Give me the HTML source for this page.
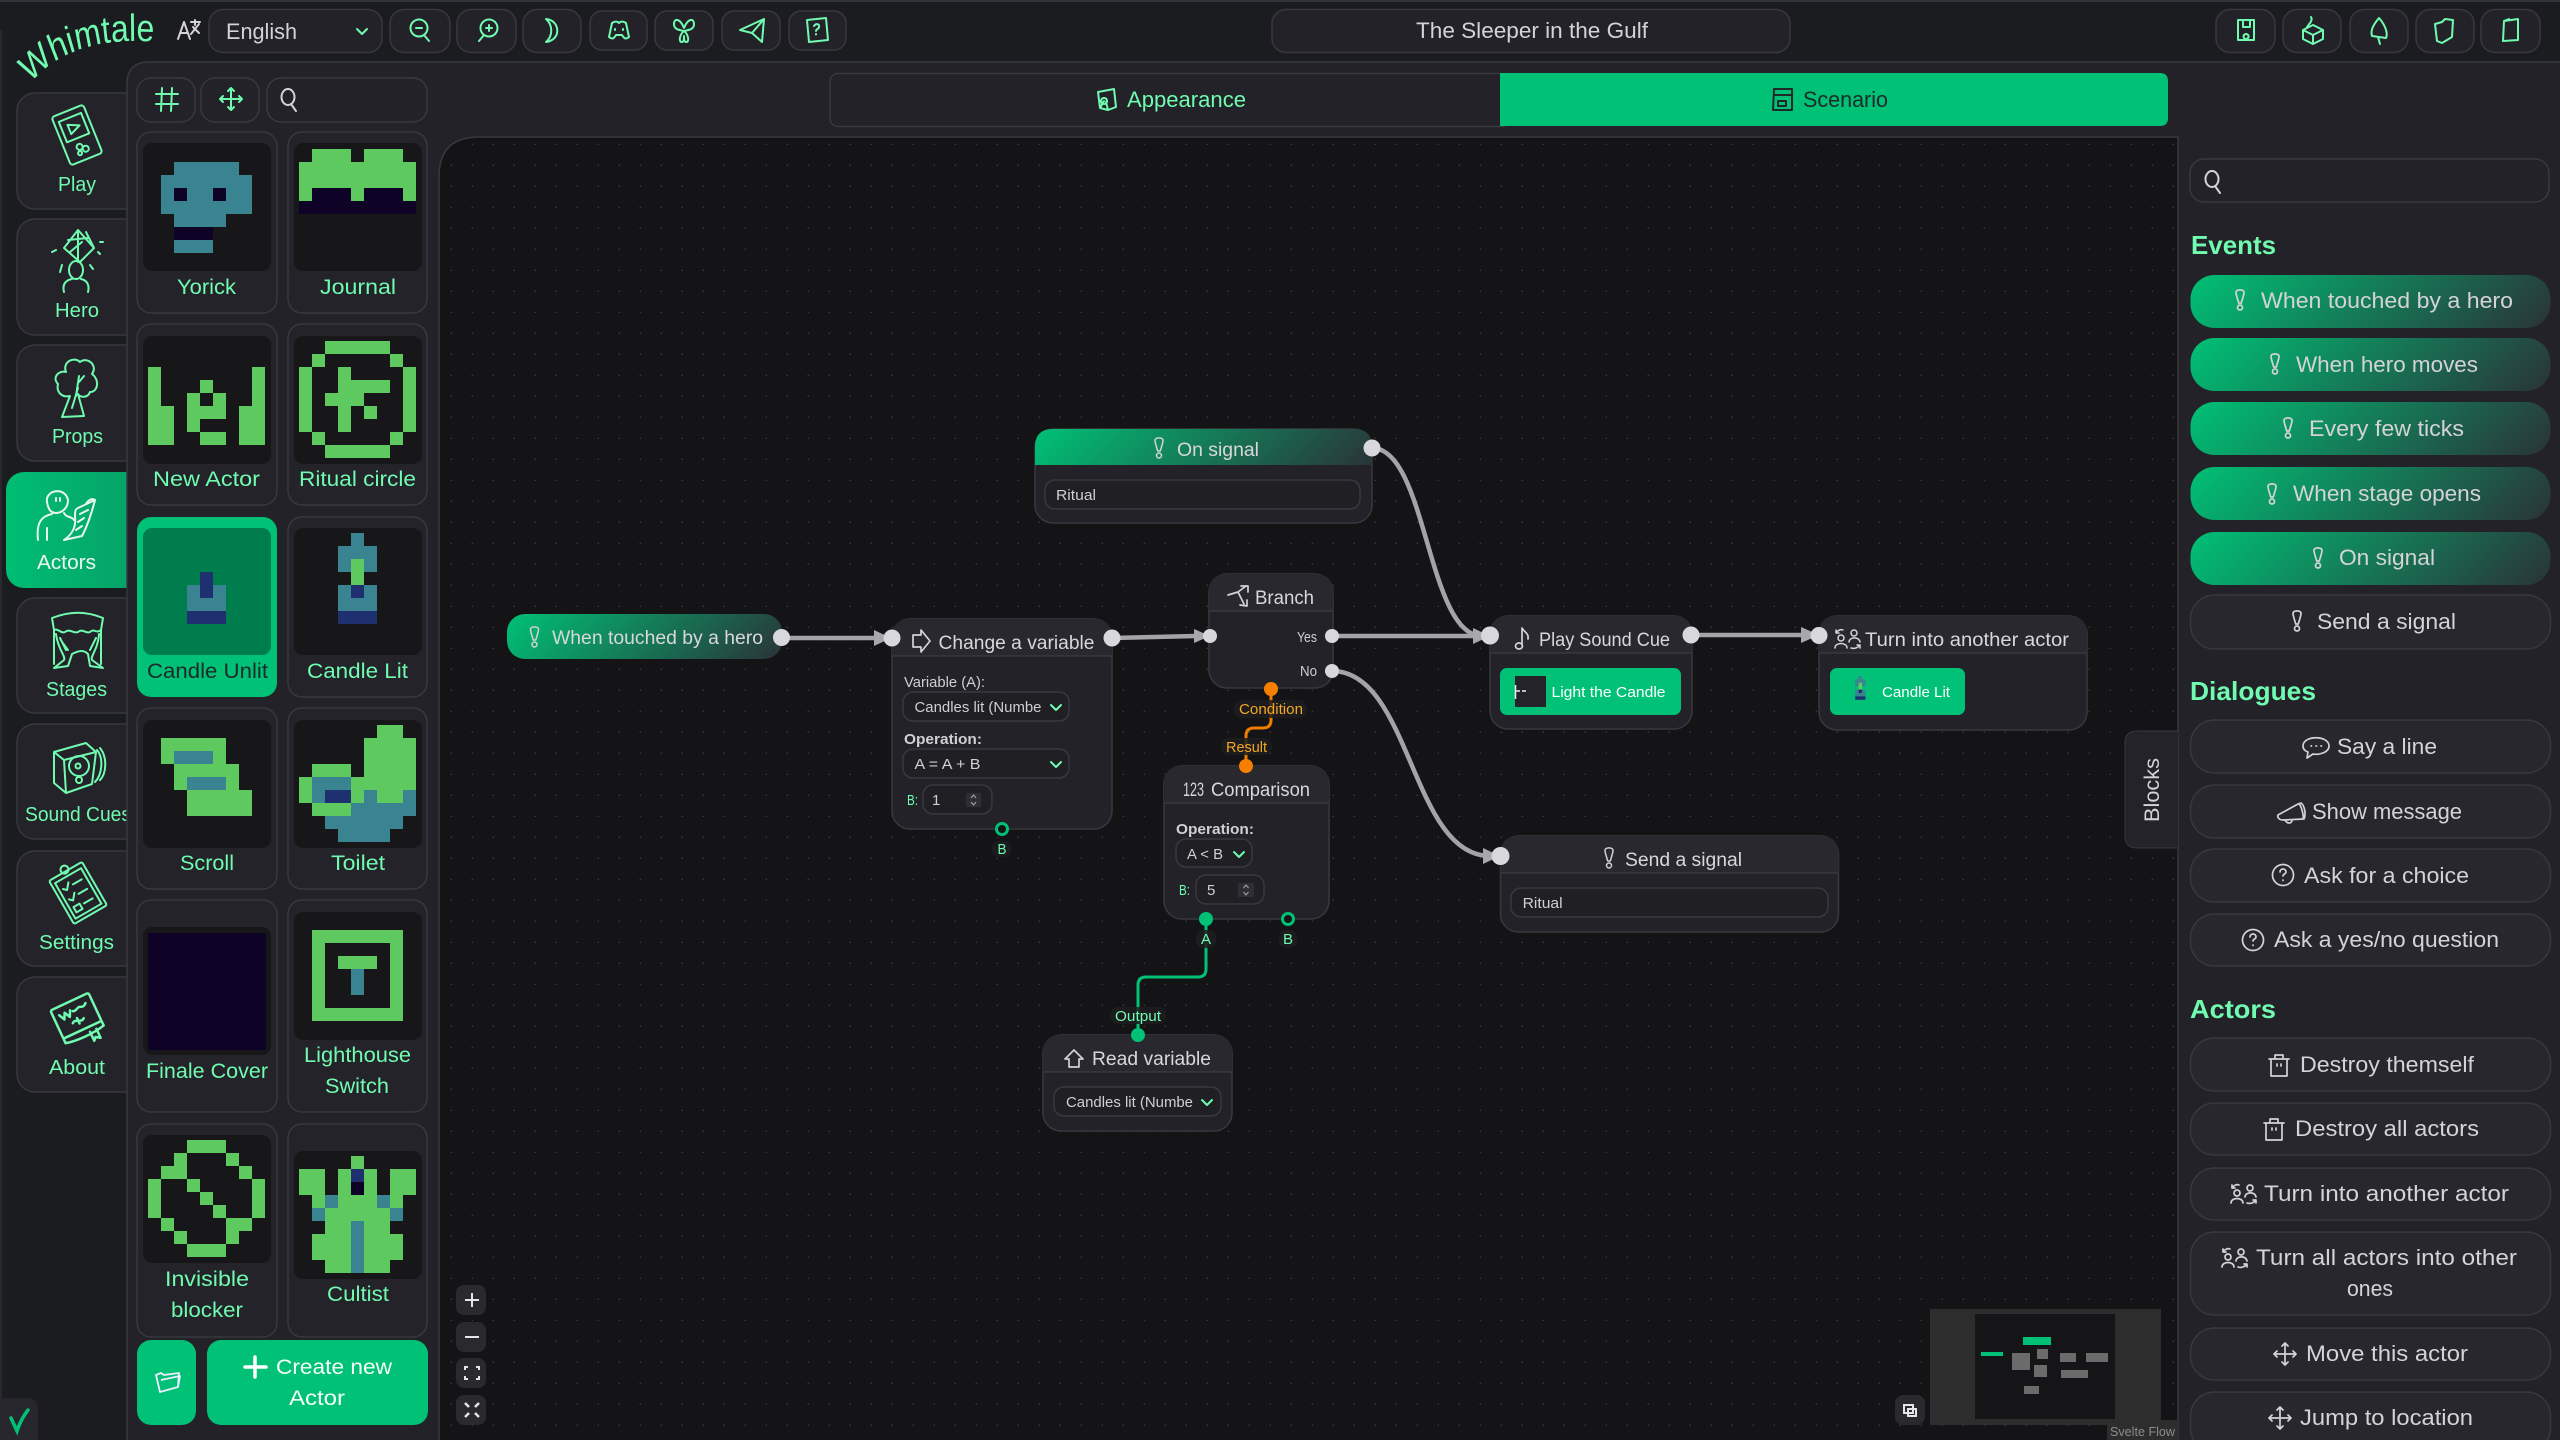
<!DOCTYPE html>
<html lang="en"><head><meta charset="utf-8"><title>Whimtale</title>
<style>
html,body{margin:0;padding:0;background:#1b1c1f;width:2560px;height:1440px;overflow:hidden}
svg{display:block;font-family:"Liberation Sans",sans-serif}
text{white-space:pre}
.box{fill:#222228;stroke:#38383f;stroke-width:1.5}
.card{fill:#232329;stroke:#38383f;stroke-width:1.5}
.thumb{fill:#17171a}
.fld{fill:#1f1f24;stroke:#38383f;stroke-width:1.5}
.nd{fill:#222228;stroke:#38383f;stroke-width:1.5}
.hd{fill:#28282e}
.ln{stroke:#38383f;stroke-width:1.5;fill:none}
.i{fill:none;stroke:#70fbb0;stroke-width:2;stroke-linecap:round;stroke-linejoin:round}
.w{fill:none;stroke:#d4d4d6;stroke-width:2;stroke-linecap:round;stroke-linejoin:round}
.k{fill:none;stroke:#1e2a2a;stroke-width:2;stroke-linecap:round;stroke-linejoin:round}
.s{fill:none;stroke-width:1}
.g{stroke:#5ec95e}.t{stroke:#3a8391}.n{stroke:#1f3070}.d{stroke:#0e0326}
.nav{font-size:20px;fill:#70fbb0}
.lab{font-size:21px;fill:#70fbb0}
.blk{font-size:22px;fill:#d4d4d6}
.hdg{font-size:26px;font-weight:bold;fill:#70fbb0}
.tt{font-size:19px;fill:#d8d8da}
.f{font-size:15px;fill:#d0d0d2}
.fb{font-size:15px;font-weight:bold;fill:#d0d0d2}
.gl{font-size:15px;fill:#70fbb0}
.or{font-size:15px;fill:#f5a623}
.handle{fill:#d8d8dc}
</style></head><body>
<svg width="2560" height="1440" viewBox="0 0 2560 1440">
<defs>
<linearGradient id="gB" gradientUnits="userSpaceOnUse" x1="0" y1="0" x2="206" y2="206"><stop offset="0" stop-color="#00c176"/><stop offset="1" stop-color="#2a3338"/></linearGradient>
<linearGradient id="gN" gradientUnits="userSpaceOnUse" x1="0" y1="0" x2="160" y2="160"><stop offset="0" stop-color="#00c176"/><stop offset="1" stop-color="#2a3338"/></linearGradient>
<linearGradient id="gH" gradientUnits="userSpaceOnUse" x1="0" y1="0" x2="187" y2="187"><stop offset="0" stop-color="#00c176"/><stop offset="1" stop-color="#2a3338"/></linearGradient>
<linearGradient id="gA" x1="0" y1="0" x2="1" y2="0"><stop offset="0" stop-color="#00bd73"/><stop offset="1" stop-color="#06a066"/></linearGradient>
<pattern id="dots" patternUnits="userSpaceOnUse" width="21" height="21"><circle cx="10.3" cy="18.3" r=".8" fill="#3c3c40"/></pattern>
<g id="ex"><path d="M-4-7.5C-4-11 4-11 4-7.5C4-5 2 0 1.3 3H-1.3C-2 0-4-5-4-7.5Z"/><circle cy="7.5" r="2.5"/></g>
<g id="mv"><path d="M0-11V11M-11 0H11M-3-8L0-11L3-8M-3 8L0 11L3 8M-8-3L-11 0L-8 3M8-3L11 0L8 3"/></g>
<g id="tr"><circle cx="-7" cy="-1" r="3"/><path d="M-13 9c0-6 12-6 12 0"/><circle cx="6" cy="-6" r="3"/><path d="M1 3c0-5 10-6 11 0"/><path d="M-12-6c2-3 5-4 7-3M-12-9v3h3"/><path d="M3 9c3 1 7 0 9-3M12 9v-3h-3"/></g>
<g id="tsh"><path d="M-10-6H10M-8-6V11H8V-6M-4-6V-10H4V-6M-2-1v2M2-1v2"/></g>
<g id="qq"><circle r="10.5"/><path d="M-3-3c0-4 6-4 6 0c0 2-3 2-3 4M0 5v.5"/></g>
<g id="srch"><ellipse cx="-1" cy="-2" rx="6.5" ry="8"/><path d="M2 5L7 12"/></g>
<g id="chev"><path d="M-5-3L0 2L5-3"/></g>
</defs>

<rect width="2560" height="1440" fill="#1b1c1f"/>
<path d="M0 1H2560" stroke="#3a3a40" stroke-width="1.5"/>
<path d="M1 30V1440" stroke="#2c2c32" stroke-width="1.5"/>

<!-- Logo -->
<g transform="scale(.84,1)">
<path id="lg" d="M36 84Q84 34 190 42" fill="none"/>
<text font-size="38" fill="#70fbb0"><textPath href="#lg">Whimtale</textPath></text>
</g>

<!-- top bar left -->
<g class="w" stroke-width="1.5"><path d="M178 39L184 22L190 39M180 33H188M191 22H200M195 20V25M199 24L191 34M193 27L199 33"/></g>
<rect class="box" x="209" y="9.500" width="173" height="43" rx="14"/>
<text class="blk" x="226" y="39" font-size="22" textLength="71" lengthAdjust="spacingAndGlyphs">English</text>
<g class="i" transform="translate(362,32)"><use href="#chev"/></g>
<rect class="box" x="390" y="9.500" width="60" height="43" rx="14"/>
<rect class="box" x="457" y="9.500" width="59" height="43" rx="14"/>
<rect class="box" x="523" y="9.500" width="58" height="43" rx="14"/>
<rect class="box" x="590" y="11" width="57" height="39" rx="12"/>
<rect class="box" x="655" y="11" width="58" height="39" rx="12"/>
<rect class="box" x="722" y="11" width="58" height="39" rx="12"/>
<rect class="box" x="789" y="11" width="57" height="39" rx="12"/>
<g class="i">
<g transform="translate(420,30)"><circle cx="-1" cy="-2" r="8.500"/><path d="M-4-2H2M4 5L9 11"/></g>
<g transform="translate(488,30)"><circle cx="1" cy="-2" r="8.500"/><path d="M-2-2H4M1-5V1M-4 5L-9 11"/></g>
<path d="M546 19C560 20 562 40 546 42C553 36 553 25 546 19Z"/>
<path d="M609 37L612 23C615 21 617 21 619 23C621 21 623 21 626 23L629 37C625 40 624 38 622 35H616C614 38 613 40 609 37ZM615 29v1M623 29v1"/>
<path d="M684 28C680 18 674 18 674 24C674 30 680 30 684 31C688 30 694 30 694 24C694 18 688 18 684 28ZM684 31C680 34 678 42 682 42C684 42 684 38 684 36C684 38 684 42 686 42C690 42 688 34 684 31Z"/>
<path d="M740 30L764 19L762 42L752 33ZM752 33L764 19"/>
<path d="M807 20L826 18L828 40L809 42ZM814 26c2-3 6-2 5 1c0 2-3 2-3 4M816 34v.5"/>
</g>

<!-- Title -->
<rect class="box" x="1272" y="9.500" width="518" height="43" rx="14"/>
<text class="blk" x="1416" y="38" textLength="232" lengthAdjust="spacingAndGlyphs">The Sleeper in the Gulf</text>

<!-- Right top buttons -->
<rect class="box" x="2216" y="9.500" width="59" height="43" rx="14"/>
<rect class="box" x="2283" y="9.500" width="58" height="43" rx="14"/>
<rect class="box" x="2350" y="9.500" width="58" height="43" rx="14"/>
<rect class="box" x="2416" y="9.500" width="58" height="43" rx="14"/>
<rect class="box" x="2481" y="9.500" width="59" height="43" rx="14"/>
<g class="i">
<path d="M2238 20H2254V40H2238ZM2243 20V27H2250V20M2246 34a2.500 2.500 0 1 0 .1 0"/>
<path d="M2303 30L2313 25L2323 30V39L2313 44L2303 39ZM2303 30L2313 35L2323 30M2313 35V44M2307 27C2310 23 2313 20 2311 17"/>
<path d="M2379 18C2386 26 2388 34 2386 38L2372 36C2370 30 2374 24 2379 18ZM2378 37L2380 44"/>
<path d="M2435 24L2442 22L2445 19L2453 20L2452 37L2442 43L2437 41Z"/>
<path d="M2504 21L2518 19V40L2503 41ZM2504 21L2509 19"/>
</g>

<!-- Left nav cards -->
<g>
<rect class="card" x="17" y="93" width="140" height="116" rx="18"/>
<rect class="card" x="17" y="219" width="140" height="116" rx="18"/>
<rect class="card" x="17" y="345" width="140" height="116" rx="18"/>
<rect x="6" y="472" width="140" height="116" rx="18" fill="url(#gA)"/>
<rect class="card" x="17" y="598" width="140" height="115" rx="18"/>
<rect class="card" x="17" y="724" width="140" height="115" rx="18"/>
<rect class="card" x="17" y="851" width="140" height="115" rx="18"/>
<rect class="card" x="17" y="977" width="140" height="115" rx="18"/>
</g>
<g class="i">
<!-- play -->
<g transform="translate(77,135) rotate(-22)"><rect x="-17" y="-26" width="34" height="52" rx="3"/><rect x="-12" y="-19" width="24" height="22"/><path d="M-5-13L6-8L-5-3Z"/><circle cx="-2" cy="12" r="3"/><circle cx="3" cy="16" r="3"/><circle cx="-4" cy="18" r="2"/></g>
<!-- hero -->
<path d="M78 230L94 248L80 262L64 248ZM68 240L88 238M78 230V262M86 232L94 248M70 252L82 242" stroke-width="2"/>
<ellipse cx="76" cy="270" rx="7" ry="9"/>
<path d="M64 292C62 284 66 280 72 279M88 292C90 284 86 280 81 279M52 252L56 250M100 242H103M62 265L60 272M90 265L93 269M98 252L100 254"/>
<!-- props -->
<path d="M66 372C62 362 74 356 80 362C88 356 98 366 92 374C100 380 98 392 90 392C88 398 80 398 78 394L84 416L62 417L70 396C62 398 56 392 58 384C52 378 58 370 66 372ZM76 396L79 376M72 408L78 388M79 382L84 376"/>
<!-- stages -->
<path d="M52 618C70 611 86 611 103 618L101 630C96 634 94 628 90 632C85 634 83 628 78 632C73 634 70 628 65 632C61 634 58 628 54 630ZM54 630V664M101 630V664M56 634C58 650 66 656 64 660L54 668L68 666L72 654C80 650 84 650 88 654L90 666L103 668L92 660C90 656 98 650 99 634M60 638L66 650M96 638L90 650M62 642L68 650"/>
<!-- sound -->
<path d="M54 752L86 743L96 752L92 784L66 793L54 783ZM54 752L64 760L66 793M64 760L96 752"/>
<circle cx="79" cy="766" r="10"/><circle cx="78" cy="766" r="2.500"/><circle cx="79" cy="780" r="3"/>
<path d="M97 750C104 758 102 775 95 782M100 748C108 758 106 774 100 780"/>
<!-- settings -->
<g transform="translate(78,893) rotate(-30)"><rect x="-19" y="-25" width="38" height="50" rx="2"/><rect x="-15" y="-20" width="30" height="41"/><circle cx="0" cy="-27" r="4"/><path d="M-11-11l3 3l5-6M0-10H10M-11 1l3 3l5-6M0 1H10M-11 10h7v6h-7zM0 12H10"/></g>
<!-- about -->
<g transform="translate(77,1018) rotate(-25)" stroke-width="2.500"><rect x="-21" y="-18" width="42" height="31" rx="2"/><path d="M-21 13V18C-10 21 10 21 21 18V13M-15-10l3 6l3-6l3 6l3-6M-1-8c3 2 6-2 8-1c2 1 4 2 7-1M-6 3c4-4 8 4 12 0M0 0V6M6 18V28L9 25L13 28V18"/></g>
</g>
<!-- actors icon -->
<g fill="none" stroke="#e6f7ed" stroke-width="2" stroke-linecap="round" stroke-linejoin="round">
<path d="M47 502C45 490 65 486 68 500C68 508 62 513 56 513C50 513 48 508 47 502Z"/><path d="M38 540C36 522 42 516 52 514M64 513C66 518 72 516 74 520M47 528V540"/>
<path d="M78 508L95 500C93 508 88 525 82 536L64 540C70 536 74 530 75 524C76 518 73 510 78 508ZM95 500C92 498 88 500 86 504M80 514L88 510M78 522L84 518M76 530L82 526"/>
<path d="M56 498v3M60 498v3"/>
</g>
<!-- nav labels -->
<text class="nav" x="58" y="191" textLength="38" lengthAdjust="spacingAndGlyphs">Play</text>
<text class="nav" x="55" y="317" textLength="44" lengthAdjust="spacingAndGlyphs">Hero</text>
<text class="nav" x="52" y="443" textLength="51" lengthAdjust="spacingAndGlyphs">Props</text>
<text class="nav" x="37" y="569" textLength="59" lengthAdjust="spacingAndGlyphs" style="fill:#ecf8f1">Actors</text>
<text class="nav" x="46" y="696" textLength="61" lengthAdjust="spacingAndGlyphs">Stages</text>
<text class="nav" x="25" y="821" textLength="106" lengthAdjust="spacingAndGlyphs">Sound Cues</text>
<text class="nav" x="39" y="949" textLength="75" lengthAdjust="spacingAndGlyphs">Settings</text>
<text class="nav" x="49" y="1074" textLength="56" lengthAdjust="spacingAndGlyphs">About</text>

<!-- check -->
<path d="M0 1398H26Q38 1398 38 1410V1440H0Z" fill="#26262c"/>
<path d="M11 1418L17 1431C20 1422 24 1415 28 1410" fill="none" stroke="#00c176" stroke-width="3.500" stroke-linecap="round"/>

<!-- Main panel -->
<path d="M127 1440V84Q127 62 149 62H2560V1440Z" fill="#222228"/>
<path d="M127 1440V84Q127 62 149 62H2560" fill="none" stroke="#38383f" stroke-width="1.500"/>

<!-- Canvas -->
<path d="M439 1440V177Q439 137 479 137H2178V1440Z" fill="#141416"/>
<path d="M439 1440V177Q439 137 479 137H2178V1440Z" fill="url(#dots)"/>
<path d="M439 1440V177Q439 137 479 137H2178V1440" fill="none" stroke="#38383f" stroke-width="1.500"/>

<!-- Left tool row -->
<rect class="box" x="137" y="78" width="58" height="44" rx="14"/>
<rect class="box" x="201" y="78" width="58" height="44" rx="14"/>
<rect class="box" x="267" y="78" width="160" height="44" rx="14"/>
<g class="i" stroke-width="2.500"><path d="M162 88L161 111M172 88L171 111M156 94H178M156 104H178"/></g>
<g class="i" transform="translate(231,99)"><use href="#mv"/></g>
<g class="w" transform="translate(289,99)"><use href="#srch"/></g>

<!-- Tabs -->
<rect class="box" x="830" y="73.500" width="680" height="53" rx="8"/>
<path d="M1500 73H2160Q2168 73 2168 81V118Q2168 126 2160 126H1500Z" fill="#00c176"/>
<g class="i"><path d="M1098 92L1114 89L1116 107L1108 110L1100 108ZM1104 98a3 3 0 1 0 .1 0M1100 108L1104 101M1108 110L1106 102"/></g>
<text class="blk" x="1127" y="107" font-size="21" style="fill:#70fbb0" textLength="119" lengthAdjust="spacingAndGlyphs">Appearance</text>
<g class="k"><path d="M1774 89H1792V110H1773ZM1774 95H1792M1778 101h8v5h-8z"/></g>
<text class="blk" x="1803" y="107" style="fill:#1e2a2a" font-size="21" textLength="85" lengthAdjust="spacingAndGlyphs">Scenario</text>

<!-- Actor cards -->
<g>
<rect class="card" x="137" y="132" width="140" height="181" rx="14"/><rect class="card" x="288" y="132" width="139" height="181" rx="14"/>
<rect class="card" x="137" y="324" width="140" height="181" rx="14"/><rect class="card" x="288" y="324" width="139" height="181" rx="14"/>
<rect x="137" y="517" width="140" height="180" rx="14" fill="#00c176"/><rect class="card" x="288" y="517" width="139" height="180" rx="14"/>
<rect class="card" x="137" y="708" width="140" height="181" rx="14"/><rect class="card" x="288" y="708" width="139" height="181" rx="14"/>
<rect class="card" x="137" y="900" width="140" height="212" rx="14"/><rect class="card" x="288" y="900" width="139" height="212" rx="14"/>
<rect class="card" x="137" y="1124" width="140" height="213" rx="14"/><rect class="card" x="288" y="1124" width="139" height="213" rx="14"/>
</g>
<g>
<rect class="thumb" x="143" y="143" width="128" height="128" rx="9"/><rect class="thumb" x="294" y="143" width="128" height="128" rx="9"/>
<rect class="thumb" x="143" y="336" width="128" height="128" rx="9"/><rect class="thumb" x="294" y="336" width="128" height="128" rx="9"/>
<rect x="143" y="528" width="128" height="127" rx="9" fill="#007d4d"/><rect class="thumb" x="294" y="528" width="128" height="127" rx="9"/>
<rect class="thumb" x="143" y="720" width="128" height="128" rx="9"/><rect class="thumb" x="294" y="720" width="128" height="128" rx="9"/>
<rect class="thumb" x="143" y="927" width="128" height="128" rx="9"/><rect class="thumb" x="294" y="912" width="128" height="128" rx="9"/>
<rect class="thumb" x="143" y="1135" width="128" height="128" rx="9"/><rect class="thumb" x="294" y="1151" width="128" height="128" rx="9"/>
</g>
<!-- sprites -->
<g class="s" transform="translate(148,149) scale(13)"><path class="t" d="M2 1.500h5M1 2.500h7M1 3.500h1M3 3.500h2M6 3.500h2M1 4.500h7M2 5.500h4M2 7.500h3"/><path class="d" d="M2 3.500h1M5 3.500h1M2 6.500h3"/></g>
<g class="s" transform="translate(299,149) scale(13)"><path class="g" d="M1 .5h3M5 .5h3M0 1.500h9M0 2.500h9M0 3.500h1M4 3.500h1M8 3.500h1"/><path class="d" d="M1 3.500h3M5 3.500h3M0 4.500h9"/></g>
<g class="s" transform="translate(148,341) scale(13)"><path class="g" d="M0 2.500h1M8 2.500h1M0 3.500h1M4 3.500h1M8 3.500h1M0 4.500h1M3 4.500h1M5 4.500h1M8 4.500h1M0 5.500h2M3 5.500h3M7 5.500h2M0 6.500h2M3 6.500h1M7 6.500h2M0 7.500h2M4 7.500h2M7 7.500h2"/></g>
<g class="s" transform="translate(299,341) scale(13)"><path class="g" d="M2 .5h5M1 1.500h1M7 1.500h1M0 2.500h1M3 2.500h1M8 2.500h1M0 3.500h1M3 3.500h4M8 3.500h1M0 4.500h1M2 4.500h3M8 4.500h1M0 5.500h1M3 5.500h1M5 5.500h1M8 5.500h1M0 6.500h1M3 6.500h1M8 6.500h1M1 7.500h1M7 7.500h1M2 8.500h5"/></g>
<g class="s" transform="translate(148,533) scale(13)"><path class="n" d="M4 3.500h1M4 4.500h1M3 6.500h3"/><path class="t" d="M3 4.500h1M5 4.500h1M3 5.500h3"/></g>
<g class="s" transform="translate(299,533) scale(13)"><path class="t" d="M4 .5h1M3 1.500h3M3 2.500h1M5 2.500h1M3 4.500h1M5 4.500h1M3 5.500h3"/><path class="g" d="M4 2.500h1M4 3.500h1"/><path class="n" d="M4 4.500h1M3 6.500h3"/></g>
<g class="s" transform="translate(148,725) scale(13)"><path class="g" d="M1 1.500h5M1 2.500h1M5 2.500h1M2 3.500h5M2 4.500h1M6 4.500h1M3 5.500h5M3 6.500h5"/><path class="t" d="M2 2.500h3M3 4.500h3"/></g>
<g class="s" transform="translate(299,725) scale(13)"><path class="g" d="M6 .5h2M5 1.500h4M5 2.500h4M1 3.500h3M5 3.500h4M0 4.500h1M4 4.500h5M0 5.500h1M4 5.500h1M6 5.500h2M1 6.500h3"/><path class="t" d="M1 4.500h3M1 5.500h1M5 5.500h1M8 5.500h1M4 6.500h5M2 7.500h6M3 8.500h4"/><path class="n" d="M2 5.500h2"/></g>
<rect x="148" y="933" width="118" height="117" fill="#0e0326"/>
<g class="s" transform="translate(299,917) scale(13)"><path class="g" d="M1 1.500h7M1 2.500h1M7 2.500h1M1 3.500h1M3 3.500h3M7 3.500h1M1 4.500h1M7 4.500h1M1 5.500h1M7 5.500h1M1 6.500h1M7 6.500h1M1 7.500h7"/><path class="t" d="M4 4.500h1M4 5.500h1"/></g>
<g class="s" transform="translate(148,1140) scale(13)"><path class="g" d="M3 .5h3M2 1.500h1M6 1.500h1M1 2.500h2M7 2.500h1M0 3.500h1M3 3.500h1M8 3.500h1M0 4.500h1M4 4.500h1M8 4.500h1M0 5.500h1M5 5.500h1M8 5.500h1M1 6.500h1M6 6.500h2M2 7.500h1M6 7.500h1M3 8.500h3"/></g>
<g class="s" transform="translate(299,1156) scale(13)"><path class="g" d="M4 .5h1M0 1.500h2M3 1.500h1M5 1.500h1M7 1.500h2M0 2.500h2M3 2.500h1M5 2.500h1M7 2.500h2M1 3.500h1M3 3.500h3M7 3.500h1M2 4.500h5M2 5.500h2M5 5.500h2M1 6.500h3M5 6.500h3M1 7.500h3M5 7.500h3M2 8.500h2M5 8.500h2"/><path class="t" d="M2 3.500h1M6 3.500h1M1 4.500h1M7 4.500h1M4 5.500h1M4 6.500h1M4 7.500h1M4 8.500h1"/><path class="n" d="M4 1.500h1"/><path class="d" d="M4 2.500h1"/></g>
<!-- card labels -->
<text class="lab" x="177" y="294" textLength="59" lengthAdjust="spacingAndGlyphs">Yorick</text>
<text class="lab" x="320" y="294" textLength="76" lengthAdjust="spacingAndGlyphs">Journal</text>
<text class="lab" x="153" y="486" textLength="107" lengthAdjust="spacingAndGlyphs">New Actor</text>
<text class="lab" x="299" y="486" textLength="117" lengthAdjust="spacingAndGlyphs">Ritual circle</text>
<text class="lab" x="147" y="678" style="fill:#1e2a2a" textLength="121" lengthAdjust="spacingAndGlyphs">Candle Unlit</text>
<text class="lab" x="307" y="678" textLength="101" lengthAdjust="spacingAndGlyphs">Candle Lit</text>
<text class="lab" x="180" y="870" textLength="54" lengthAdjust="spacingAndGlyphs">Scroll</text>
<text class="lab" x="331" y="870" textLength="54" lengthAdjust="spacingAndGlyphs">Toilet</text>
<text class="lab" x="146" y="1078" textLength="122" lengthAdjust="spacingAndGlyphs">Finale Cover</text>
<text class="lab" x="304" y="1062" textLength="107" lengthAdjust="spacingAndGlyphs">Lighthouse</text>
<text class="lab" x="325" y="1093" textLength="64" lengthAdjust="spacingAndGlyphs">Switch</text>
<text class="lab" x="165" y="1286" textLength="84" lengthAdjust="spacingAndGlyphs">Invisible</text>
<text class="lab" x="171" y="1317" textLength="72" lengthAdjust="spacingAndGlyphs">blocker</text>
<text class="lab" x="327" y="1301" textLength="62" lengthAdjust="spacingAndGlyphs">Cultist</text>

<!-- Bottom buttons -->
<rect x="137" y="1340" width="59" height="85" rx="14" fill="#00c176"/>
<rect x="207" y="1340" width="221" height="85" rx="14" fill="#00c176"/>
<path d="M156 1375L161 1373L164 1375L179 1373L178 1387L160 1392ZM161 1380L180 1376L178 1387" fill="none" stroke="#eef" stroke-width="1.800" stroke-linejoin="round"/>
<path d="M245 1367H266M255 1357V1377" fill="none" stroke="#fff" stroke-width="3.500" stroke-linecap="round"/>
<text x="276" y="1374" font-size="21" fill="#f4fff9" textLength="116" lengthAdjust="spacingAndGlyphs">Create new</text>
<text x="289" y="1405" font-size="21" fill="#f4fff9" textLength="56" lengthAdjust="spacingAndGlyphs">Actor</text>

<!-- Flow controls -->
<g fill="#2a2a2e">
<rect x="456" y="1285" width="30" height="30" rx="8"/><rect x="456" y="1322" width="30" height="30" rx="8"/><rect x="456" y="1358" width="30" height="30" rx="8"/><rect x="456" y="1395" width="30" height="30" rx="8"/>
<rect x="1895" y="1395" width="30" height="30" rx="8"/>
</g>
<g fill="none" stroke="#e6e6e8" stroke-width="2">
<path d="M465 1300H479M472 1293V1307M465 1337H479"/>
<path d="M465 1370V1367H468M476 1367H479V1370M479 1376V1379H476M468 1379H465V1376"/>
<path d="M465 1403L469 1407M479 1403L475 1407M465 1417L469 1413M479 1417L475 1413" stroke-width="2.500"/>
<rect x="1904" y="1405" width="9" height="8"/><rect x="1908" y="1409" width="8" height="7"/>
</g>

<!-- Minimap -->
<rect x="1930" y="1309" width="231" height="116" fill="#2d2d2d"/>
<rect x="1975" y="1314" width="140" height="105" fill="#151517"/>
<g fill="#00c176"><rect x="2023" y="1337" width="28" height="8"/><rect x="1981" y="1352" width="22" height="4"/></g>
<g fill="#6b6b6b"><rect x="2012" y="1353" width="18" height="17"/><rect x="2037" y="1349" width="11" height="10"/><rect x="2034" y="1365" width="13" height="12"/><rect x="2060" y="1353" width="16" height="9"/><rect x="2086" y="1353" width="22" height="9"/><rect x="2061" y="1370" width="27" height="8"/><rect x="2024" y="1386" width="15" height="8"/></g>
<rect x="2107" y="1420" width="71" height="20" fill="#2d2d2d"/>
<text x="2110" y="1436" font-size="13" fill="#8c8c8c" textLength="65" lengthAdjust="spacingAndGlyphs">Svelte Flow</text>

<!-- Blocks tab -->
<path d="M2178 731H2137Q2125 731 2125 743V836Q2125 848 2137 848H2178Z" fill="#232329"/>
<path d="M2178 731H2137Q2125 731 2125 743V836Q2125 848 2137 848H2178" fill="none" stroke="#38383f" stroke-width="1"/>
<text transform="translate(2159,822) rotate(-90)" font-size="21" fill="#d4d4d6" textLength="64" lengthAdjust="spacingAndGlyphs">Blocks</text>

<!-- Right panel -->
<rect class="box" x="2190" y="159" width="359" height="43" rx="14"/>
<g class="w" transform="translate(2213,181)"><use href="#srch"/></g>
<text class="hdg" x="2191" y="254" textLength="85" lengthAdjust="spacingAndGlyphs">Events</text>
<text class="hdg" x="2190" y="700" textLength="126" lengthAdjust="spacingAndGlyphs">Dialogues</text>
<text class="hdg" x="2190" y="1018" textLength="86" lengthAdjust="spacingAndGlyphs">Actors</text>

<g><g transform="translate(2190.5,275)"><rect width="360" height="53" rx="24" fill="url(#gB)"/></g>
<g transform="translate(2190.5,338)"><rect width="360" height="53" rx="24" fill="url(#gB)"/></g>
<g transform="translate(2190.5,402)"><rect width="360" height="53" rx="24" fill="url(#gB)"/></g>
<g transform="translate(2190.5,467)"><rect width="360" height="53" rx="24" fill="url(#gB)"/></g>
<g transform="translate(2190.5,532)"><rect width="360" height="53" rx="24" fill="url(#gB)"/></g></g>
<g fill="#27272d" stroke="#38383f" stroke-width="1.500">
<rect x="2190.5" y="595" width="360" height="54" rx="24"/>
<rect x="2190.5" y="720" width="360" height="53" rx="24"/>
<rect x="2190.5" y="785" width="360" height="53" rx="24"/>
<rect x="2190.5" y="849" width="360" height="53" rx="24"/>
<rect x="2190.5" y="914" width="360" height="52" rx="24"/>
<rect x="2190.5" y="1038" width="360" height="53" rx="24"/>
<rect x="2190.5" y="1103" width="360" height="52" rx="24"/>
<rect x="2190.5" y="1168" width="360" height="52" rx="24"/>
<rect x="2190.5" y="1232" width="360" height="83" rx="24"/>
<rect x="2190.5" y="1328" width="360" height="52" rx="24"/>
<rect x="2190.5" y="1392" width="360" height="60" rx="24"/>
</g>
<g class="w" style="stroke-width:1.700">
<use href="#ex" x="2240" y="300"/><use href="#ex" x="2275" y="364"/><use href="#ex" x="2288" y="428"/><use href="#ex" x="2272" y="494"/><use href="#ex" x="2318" y="558"/><use href="#ex" x="2297" y="621"/>
<path d="M2303 746C2303 735 2329 735 2329 746C2329 753 2318 755 2313 754L2307 758L2308 752C2305 751 2303 749 2303 746ZM2311 746h.5M2316 746h.5M2321 746h.5"/>
<path d="M2278 815L2298 804C2301 803 2304 816 2303 819L2283 820C2279 820 2277 817 2278 815ZM2285 820C2287 824 2292 824 2292 820M2298 804L2301 803C2305 806 2306 815 2304 819"/>
<use href="#qq" x="2283" y="875"/><use href="#qq" x="2253" y="940"/>
<use href="#tsh" x="2279" y="1065"/><use href="#tsh" x="2274" y="1129"/>
<use href="#tr" x="2244" y="1194"/><use href="#tr" x="2235" y="1258"/>
<use href="#mv" x="2285" y="1354"/><use href="#mv" x="2280" y="1418"/>
</g>
<g class="blk">
<text x="2261" y="308" textLength="252" lengthAdjust="spacingAndGlyphs">When touched by a hero</text>
<text x="2296" y="372" textLength="182" lengthAdjust="spacingAndGlyphs">When hero moves</text>
<text x="2309" y="436" textLength="155" lengthAdjust="spacingAndGlyphs">Every few ticks</text>
<text x="2293" y="501" textLength="188" lengthAdjust="spacingAndGlyphs">When stage opens</text>
<text x="2339" y="565" textLength="96" lengthAdjust="spacingAndGlyphs">On signal</text>
<text x="2317" y="629" textLength="139" lengthAdjust="spacingAndGlyphs">Send a signal</text>
<text x="2337" y="754" textLength="100" lengthAdjust="spacingAndGlyphs">Say a line</text>
<text x="2312" y="819" textLength="150" lengthAdjust="spacingAndGlyphs">Show message</text>
<text x="2304" y="883" textLength="165" lengthAdjust="spacingAndGlyphs">Ask for a choice</text>
<text x="2274" y="947" textLength="225" lengthAdjust="spacingAndGlyphs">Ask a yes/no question</text>
<text x="2300" y="1072" textLength="174" lengthAdjust="spacingAndGlyphs">Destroy themself</text>
<text x="2295" y="1136" textLength="184" lengthAdjust="spacingAndGlyphs">Destroy all actors</text>
<text x="2264" y="1201" textLength="245" lengthAdjust="spacingAndGlyphs">Turn into another actor</text>
<text x="2256" y="1265" textLength="261" lengthAdjust="spacingAndGlyphs">Turn all actors into other</text>
<text x="2347" y="1296" textLength="46" lengthAdjust="spacingAndGlyphs">ones</text>
<text x="2306" y="1361" textLength="162" lengthAdjust="spacingAndGlyphs">Move this actor</text>
<text x="2300" y="1425" textLength="173" lengthAdjust="spacingAndGlyphs">Jump to location</text>
</g>

<!-- Edges -->
<g fill="none" stroke="#a4a4a8" stroke-width="4.500">
<path d="M782 638H880"/><path d="M1112 638L1196 636"/><path d="M1332 636H1476"/>
<path d="M1372 448C1427 448 1427 636 1482 636" /><path d="M1332 671C1411 671 1411 856 1490 856"/><path d="M1691 635H1806"/>
</g>
<g fill="#a8a8ac">
<path d="M874 630L891 638L874 646Z"/><path d="M1194 629L1210 636L1194 643Z"/><path d="M1473 628L1490 636L1473 644Z"/><path d="M1483 848L1500 856L1483 864Z"/><path d="M1801 627L1819 635L1801 643Z"/>
</g>
<path d="M1271 689V720Q1271 728 1263 728H1254Q1246 728 1246 736V766" fill="none" stroke="#f07d00" stroke-width="3"/>
<path d="M1206 919V969Q1206 977 1198 977H1146Q1138 977 1138 985V1035" fill="none" stroke="#00c176" stroke-width="3"/>

<!-- When touched node -->
<g transform="translate(507,614)"><rect width="275" height="45" rx="18" fill="url(#gN)"/></g>
<g class="w" style="stroke-width:1.500"><use href="#ex" x="534.500" y="637"/></g>
<text class="tt" x="552" y="644" textLength="211" lengthAdjust="spacingAndGlyphs">When touched by a hero</text>

<!-- On signal -->
<rect class="nd" x="1035" y="429" width="337" height="94" rx="18"/>
<g transform="translate(1035,429)"><path d="M0 36V18Q0 0 18 0H319Q337 0 337 18V36Z" fill="url(#gH)"/></g>
<g class="w" style="stroke-width:1.500"><use href="#ex" x="1159" y="448"/></g>
<text class="tt" x="1177" y="456" textLength="82" lengthAdjust="spacingAndGlyphs">On signal</text>
<rect class="fld" x="1045" y="480" width="315" height="29" rx="10"/>
<text class="f" x="1056" y="500" textLength="40" lengthAdjust="spacingAndGlyphs">Ritual</text>

<!-- Change a variable -->
<rect class="nd" x="892" y="619" width="220" height="210" rx="18"/>
<path class="hd" d="M892 656V637Q892 619 910 619H1094Q1112 619 1112 637V656Z"/><path class="ln" d="M892 656H1112"/>
<g class="w" style="stroke-width:1.700"><path d="M913 635H921V630L930 641L921 652V647H913Z"/></g>
<text class="tt" x="938.500" y="649" textLength="156" lengthAdjust="spacingAndGlyphs">Change a variable</text>
<text class="f" x="904" y="687" textLength="81" lengthAdjust="spacingAndGlyphs">Variable (A):</text>
<rect class="fld" x="903" y="692" width="166" height="29" rx="10"/>
<text class="f" x="914.500" y="712" textLength="127" lengthAdjust="spacingAndGlyphs">Candles lit (Numbe</text>
<g class="i" transform="translate(1056,708)"><use href="#chev"/></g>
<text class="fb" x="904" y="744" textLength="78" lengthAdjust="spacingAndGlyphs">Operation:</text>
<rect class="fld" x="903" y="749" width="166" height="29" rx="10"/>
<text class="f" x="914.500" y="769" textLength="66" lengthAdjust="spacingAndGlyphs">A = A + B</text>
<g class="i" transform="translate(1056,765)"><use href="#chev"/></g>
<text class="gl" x="907" y="805" textLength="11" lengthAdjust="spacingAndGlyphs">B:</text>
<rect class="fld" x="923" y="785" width="69" height="29" rx="10"/>
<text class="f" x="932" y="805">1</text>
<rect x="966" y="793" width="15" height="14" fill="#2e2e36"/>
<path d="M971 798l2.500-3l2.500 3M971 802l2.500 3l2.500-3" fill="none" stroke="#9a9aa0" stroke-width="1.200"/>

<!-- Branch -->
<rect class="nd" x="1209" y="574" width="124" height="114" rx="18"/>
<path class="hd" d="M1209 611V592Q1209 574 1227 574H1315Q1333 574 1333 592V611Z"/><path class="ln" d="M1209 611H1333"/>
<g class="w" style="stroke-width:1.700"><path d="M1228 595L1238 592L1246 586M1241 586H1248V592M1238 592L1244 604M1240 605L1247 606L1247 600"/></g>
<text class="tt" x="1255" y="604" textLength="59" lengthAdjust="spacingAndGlyphs">Branch</text>
<text class="f" x="1297" y="642" textLength="20" lengthAdjust="spacingAndGlyphs">Yes</text>
<text class="f" x="1300" y="676" textLength="17" lengthAdjust="spacingAndGlyphs">No</text>

<!-- Comparison -->
<rect class="nd" x="1164" y="766" width="165" height="153" rx="18"/>
<path class="hd" d="M1164 803V784Q1164 766 1182 766H1311Q1329 766 1329 784V803Z"/><path class="ln" d="M1164 803H1329"/>
<text class="tt" x="1183" y="796" textLength="21" lengthAdjust="spacingAndGlyphs">123</text>
<text class="tt" x="1211" y="796" textLength="99" lengthAdjust="spacingAndGlyphs">Comparison</text>
<text class="fb" x="1176" y="834" textLength="78" lengthAdjust="spacingAndGlyphs">Operation:</text>
<rect class="fld" x="1176" y="839" width="76" height="28" rx="10"/>
<text class="f" x="1187" y="859" textLength="36" lengthAdjust="spacingAndGlyphs">A &lt; B</text>
<g class="i" transform="translate(1239,855)"><use href="#chev"/></g>
<text class="gl" x="1179" y="895" textLength="11" lengthAdjust="spacingAndGlyphs">B:</text>
<rect class="fld" x="1196" y="875" width="68" height="29" rx="10"/>
<text class="f" x="1207" y="895">5</text>
<rect x="1238" y="883" width="16" height="14" fill="#2e2e36"/>
<path d="M1243.500 888l2.500-3l2.500 3M1243.500 892l2.500 3l2.500-3" fill="none" stroke="#9a9aa0" stroke-width="1.200"/>

<!-- Read variable -->
<rect class="nd" x="1043" y="1035" width="189" height="96" rx="18"/>
<path class="hd" d="M1043 1072V1053Q1043 1035 1061 1035H1214Q1232 1035 1232 1053V1072Z"/><path class="ln" d="M1043 1072H1232"/>
<g class="w" style="stroke-width:1.700"><path d="M1074 1050L1083 1059H1079V1067H1069V1059H1065Z"/></g>
<text class="tt" x="1092" y="1065" textLength="119" lengthAdjust="spacingAndGlyphs">Read variable</text>
<rect class="fld" x="1054" y="1087" width="167" height="29" rx="10"/>
<text class="f" x="1066" y="1107" textLength="127" lengthAdjust="spacingAndGlyphs">Candles lit (Numbe</text>
<g class="i" transform="translate(1207,1103)"><use href="#chev"/></g>

<!-- Play Sound Cue -->
<rect class="nd" x="1490" y="616" width="202" height="113" rx="18"/>
<path class="hd" d="M1490 653V634Q1490 616 1508 616H1674Q1692 616 1692 634V653Z"/><path class="ln" d="M1490 653H1692"/>
<g class="w" style="stroke-width:1.700"><path d="M1522 628V645M1522 628C1524 632 1529 633 1528 639"/><ellipse cx="1519" cy="646" rx="3.500" ry="3"/></g>
<text class="tt" x="1539" y="646" textLength="131" lengthAdjust="spacingAndGlyphs">Play Sound Cue</text>
<rect x="1500" y="668" width="181" height="47" rx="7" fill="#00c176"/>
<rect x="1515" y="676" width="31" height="31" fill="#232329"/>
<path d="M1515.500 685V699M1516 691H1520M1522 691H1526" stroke="#f0f0f0" stroke-width="1.500" fill="none"/>
<text x="1551.500" y="697" font-size="15" fill="#fff" textLength="114" lengthAdjust="spacingAndGlyphs">Light the Candle</text>

<!-- Turn into -->
<rect class="nd" x="1819" y="616" width="268" height="114" rx="18"/>
<path class="hd" d="M1819 653V634Q1819 616 1837 616H2069Q2087 616 2087 634V653Z"/><path class="ln" d="M1819 653H2087"/>
<g class="w" style="stroke-width:1.500"><use href="#tr" x="1848" y="639"/></g>
<text class="tt" x="1865" y="646" textLength="204" lengthAdjust="spacingAndGlyphs">Turn into another actor</text>
<rect x="1830" y="668" width="135" height="47" rx="7" fill="#00c176"/>
<g class="s" transform="translate(1845,676) scale(3.400)"><path class="t" d="M4 .5h1M3 1.500h3M3 2.500h1M5 2.500h1M3 4.500h1M5 4.500h1M3 5.500h3"/><path class="g" d="M4 2.500h1M4 3.500h1"/><path class="n" d="M4 4.500h1M3 6.500h3"/></g>
<text x="1882" y="697" font-size="15" fill="#fff" textLength="68" lengthAdjust="spacingAndGlyphs">Candle Lit</text>

<!-- Send a signal -->
<rect class="nd" x="1500.500" y="836" width="338" height="96" rx="18"/>
<path class="hd" d="M1500.500 873V854Q1500.500 836 1518.500 836H1820.500Q1838.500 836 1838.500 854V873Z"/><path class="ln" d="M1500.500 873H1838.500"/>
<g class="w" style="stroke-width:1.500"><use href="#ex" x="1609" y="858"/></g>
<text class="tt" x="1625" y="866" textLength="117" lengthAdjust="spacingAndGlyphs">Send a signal</text>
<rect class="fld" x="1511" y="888" width="317" height="29" rx="10"/>
<text class="f" x="1522.600" y="908" textLength="40" lengthAdjust="spacingAndGlyphs">Ritual</text>

<!-- Edge labels -->
<g fill="#1d1d21" fill-opacity=".85">
<rect x="1234" y="700" width="73" height="18" rx="8"/><rect x="1221" y="738" width="51" height="17" rx="8"/>
<rect x="1196" y="930" width="20" height="18" rx="7"/><rect x="1279" y="930" width="18" height="18" rx="7"/>
<rect x="1110" y="1007" width="56" height="17" rx="8"/><rect x="992" y="841" width="19" height="16" rx="7"/>
</g>
<text class="or" x="1239" y="714" textLength="64" lengthAdjust="spacingAndGlyphs">Condition</text>
<text class="or" x="1226" y="752" textLength="41" lengthAdjust="spacingAndGlyphs">Result</text>
<text class="gl" x="1201" y="944" textLength="10" lengthAdjust="spacingAndGlyphs">A</text>
<text class="gl" x="1283" y="944" textLength="10" lengthAdjust="spacingAndGlyphs">B</text>
<text class="gl" x="1115" y="1021" textLength="46" lengthAdjust="spacingAndGlyphs">Output</text>
<text class="gl" x="997.500" y="854" textLength="9" lengthAdjust="spacingAndGlyphs">B</text>

<!-- Handles -->
<g class="handle">
<circle cx="781.500" cy="637.500" r="8.500"/><circle cx="892" cy="638" r="8.500"/><circle cx="1112" cy="638" r="8.500"/>
<circle cx="1372" cy="448" r="8.500"/><circle cx="1210" cy="636" r="7"/><circle cx="1332" cy="636" r="7"/><circle cx="1332" cy="671" r="7"/>
<circle cx="1490" cy="635.500" r="9"/><circle cx="1691" cy="635" r="8.500"/><circle cx="1819" cy="635.500" r="8.500"/><circle cx="1500.500" cy="856" r="9"/>
</g>
<circle cx="1271" cy="689" r="7" fill="#f77f00"/><circle cx="1246" cy="766" r="7" fill="#f77f00"/>
<circle cx="1206" cy="919" r="7" fill="#00c176"/><circle cx="1138" cy="1035" r="7" fill="#00c176"/>
<circle cx="1288" cy="919" r="5.500" fill="#141416" stroke="#00c176" stroke-width="3"/>
<circle cx="1002" cy="829" r="5.500" fill="#141416" stroke="#00c176" stroke-width="3"/>
</svg>
</body></html>
